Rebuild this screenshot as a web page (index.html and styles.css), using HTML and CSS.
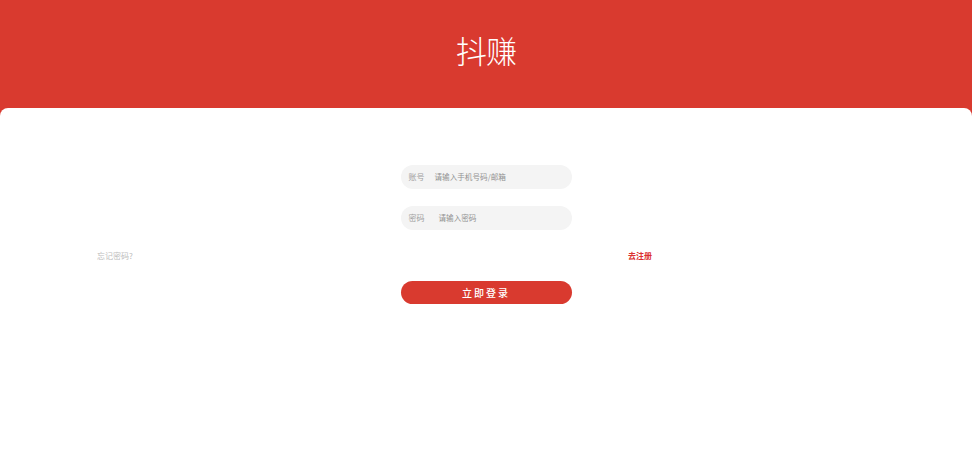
FILE: index.html
```html
<!DOCTYPE html>
<html lang="zh-CN">
<head>
<meta charset="utf-8">
<title>抖赚</title>
<link rel="stylesheet" href="styles.css">
</head>
<body>
<div class="page">
  <header class="hero"><h1 class="logo">抖赚</h1></header>
  <main class="card">
    <div class="field"><span class="label">账号</span><span class="hint hint-account">请输入手机号码/邮箱</span></div>
    <div class="field"><span class="label">密码</span><span class="hint hint-password">请输入密码</span></div>
    <div class="links"><a class="forgot">忘记密码?</a><a class="register">去注册</a></div>
    <button class="submit" type="button">立即登录</button>
  </main>
</div>
</body>
</html>
```
FILE: styles.css
```css
* { box-sizing: border-box; }
html, body { margin: 0; height: 100%; background: #fff; }
body { font-family: "Noto Sans CJK SC", "Noto Sans", sans-serif; overflow: hidden; }
.page { width: 972px; height: 453px; background: #d93a2f; display: flex; flex-direction: column; }
.hero { height: 108px; flex: none; display: flex; justify-content: center; align-items: center; padding-bottom: 9px; }
.logo { margin: 0; font-size: 31px; line-height: 40px; font-weight: 300; color: #fff; letter-spacing: -1px; }
.card { flex: 1; background: #fff; border-radius: 8px 8px 0 0; padding-top: 57px; display: flex; flex-direction: column; align-items: center; }
.field { width: 171px; height: 24px; border-radius: 12px; background: #f4f4f4; display: flex; align-items: center; padding: 0 0 1px 8px; font-size: 8px; margin-bottom: 17px; }
.label { color: #a0a0a0; width: 16px; flex: none; }
.hint { color: #929292; font-size: 7.6px; }
.hint-account { margin-left: 10px; }
.hint-password { margin-left: 14px; }
.links { align-self: stretch; display: flex; justify-content: space-between; padding: 0 320px 0 97px; font-size: 8px; line-height: 16px; margin-top: 1px; margin-bottom: 17px; }
.forgot { color: #bcbcbc; }
.register { color: #db3030; font-weight: 700; }
.submit { width: 171px; height: 23px; border: 0; border-radius: 12px; background: #d93a2f; color: #fff; font: 500 10px "Noto Sans CJK SC", sans-serif; letter-spacing: 2px; padding: 0; }
```
